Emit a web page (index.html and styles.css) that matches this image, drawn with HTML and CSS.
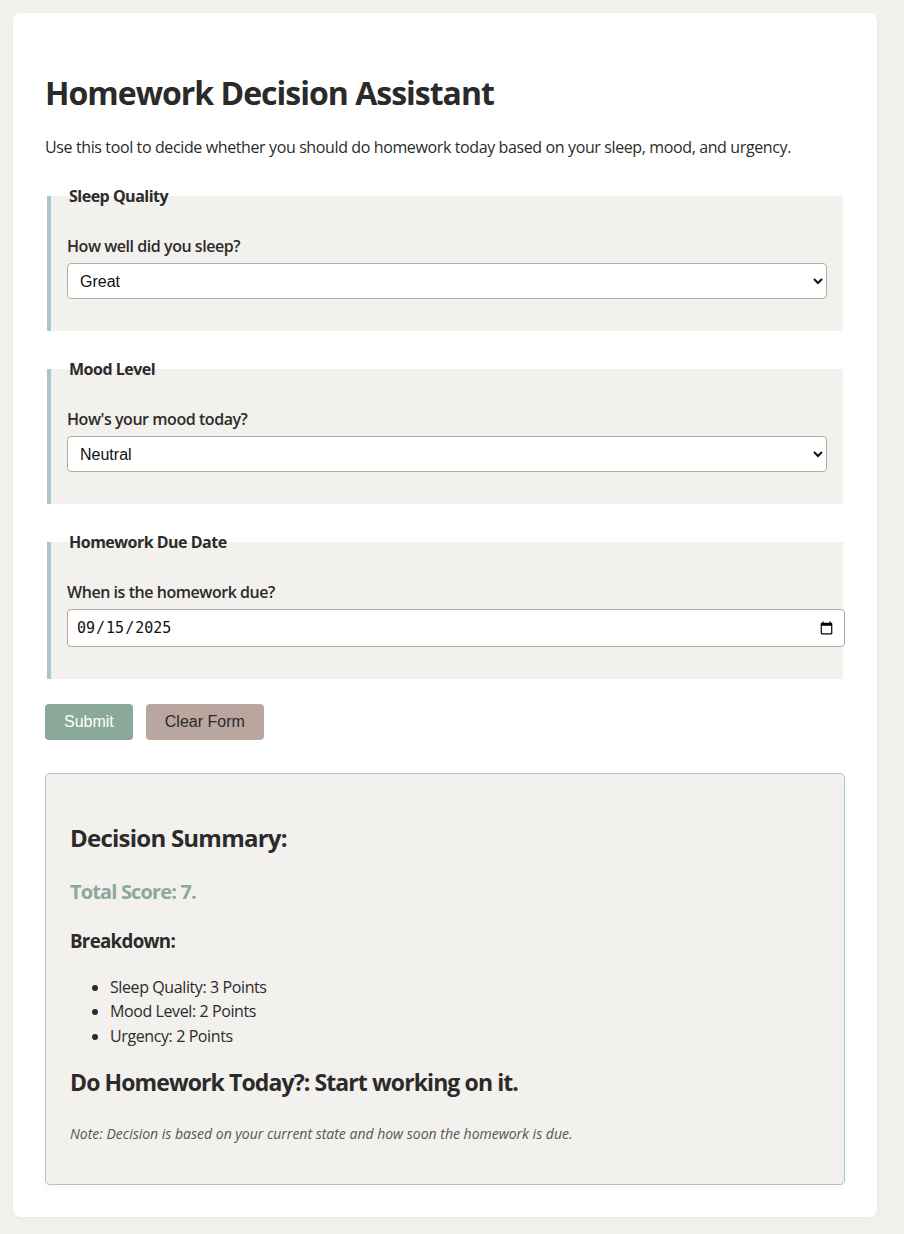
FILE: index.html
```html
<!DOCTYPE html>
<html lang="en">
<head>
<meta charset="utf-8">
<title>Homework Decision Assistant</title>
<link rel="stylesheet" href="styles.css">
</head>
<body>
<div class="container">
  <h1 class="title">Homework Decision Assistant</h1>
  <p class="intro">Use this tool to decide whether you should do homework today based on your sleep, mood, and urgency.</p>
  <form class="form">
    <fieldset class="section">
      <legend class="section-title">Sleep Quality</legend>
      <div class="field">
        <label class="field-label" for="sleep">How well did you sleep?</label>
        <select class="select" id="sleep">
          <option>Great</option>
          <option>Okay</option>
          <option>Poor</option>
        </select>
      </div>
    </fieldset>
    <fieldset class="section">
      <legend class="section-title">Mood Level</legend>
      <div class="field">
        <label class="field-label" for="mood">How's your mood today?</label>
        <select class="select" id="mood">
          <option>Neutral</option>
          <option>Good</option>
          <option>Bad</option>
        </select>
      </div>
    </fieldset>
    <fieldset class="section section-last">
      <legend class="section-title">Homework Due Date</legend>
      <div class="field">
        <label class="field-label" for="due">When is the homework due?</label>
        <input class="date" id="due" type="date" value="2025-09-15">
      </div>
    </fieldset>
    <div class="actions">
      <button class="btn btn-submit" type="button">Submit</button>
      <button class="btn btn-clear" type="button">Clear Form</button>
    </div>
  </form>
  <div class="result">
    <h2 class="result-title">Decision Summary:</h2>
    <p class="score">Total Score: 7.</p>
    <h3 class="breakdown-title">Breakdown:</h3>
    <ul class="breakdown">
      <li>Sleep Quality: 3 Points</li>
      <li>Mood Level: 2 Points</li>
      <li>Urgency: 2 Points</li>
    </ul>
    <h2 class="verdict">Do Homework Today?: Start working on it.</h2>
    <p class="note">Note: Decision is based on your current state and how soon the homework is due.</p>
  </div>
</div>
</body>
</html>
```
FILE: styles.css
```css
* {
  box-sizing: border-box;
}

html, body {
  margin: 0;
  padding: 0;
}

body {
  background: #f3f1ee;
  color: #2b2b2b;
  font-family: "Open Sans", "Noto Sans", sans-serif;
  font-size: 16px;
  line-height: 24px;
  padding: 13px;
}

.container {
  width: 864px;
  background: #ffffff;
  border-radius: 8px;
  padding: 32px;
  box-shadow: 0 2px 8px rgba(0, 0, 0, 0.04);
}

.title {
  font-size: 32px;
  line-height: 40px;
  font-weight: 700;
  letter-spacing: -1px;
  margin: 28px 0 22px;
  color: #2a2a2a;
}

.intro {
  margin: 0 0 26px;
  font-size: 16px;
  line-height: 24px;
  letter-spacing: -0.38px;
}

.form {
  margin: 0;
}

.section {
  margin: 0 2px 27px;
  padding: 16px;
  border: none;
  border-left: 4px solid #a9c6cc;
  background: #f3f1ee;
  min-width: 0;
}

.section-last {
  margin-bottom: 25px;
}

.section-title {
  font-weight: 700;
  font-size: 16px;
  line-height: 22px;
  letter-spacing: -0.5px;
  padding: 0 2px;
}

.field {
  margin: 12px 0 16px;
}

.field-label {
  display: block;
  font-weight: 600;
  font-size: 16px;
  line-height: 22px;
  letter-spacing: -0.45px;
  margin-bottom: 6px;
}

.select {
  display: block;
  width: 100%;
  height: 36px;
  padding: 0 8px;
  font-family: "Liberation Sans", Arial, sans-serif;
  font-size: 16px;
  color: #111;
  background: #ffffff;
  border: 1px solid #b8aaa3;
  border-radius: 4px;
}

.date {
  display: block;
  box-sizing: content-box;
  width: 100%;
  height: 20px;
  padding: 8px;
  font-family: "DejaVu Sans Mono", "Liberation Mono", monospace;
  font-size: 15px;
  color: #111;
  background: #ffffff;
  border: 1px solid #b8aaa3;
  border-radius: 4px;
}

.actions {
  display: flex;
  gap: 13px;
}

.btn {
  font-family: "Liberation Sans", Arial, sans-serif;
  font-size: 16px;
  line-height: 20px;
  padding: 8px 19px;
  border: none;
  border-radius: 4px;
  cursor: pointer;
}

.btn-submit {
  background: #8aa99a;
  color: #ffffff;
}

.btn-clear {
  background: #b8a69f;
  color: #2b2b2b;
}

.result {
  margin-top: 33px;
  background: #f3f1ee;
  border: 1px solid #a9c6cc;
  border-radius: 5px;
  padding: 24px;
  box-shadow: 0 2px 6px rgba(0, 0, 0, 0.04);
}

.result-title {
  font-size: 24px;
  line-height: 32px;
  font-weight: 700;
  letter-spacing: -0.76px;
  margin: 24px 0 0;
}

.score {
  font-size: 20px;
  line-height: 28px;
  font-weight: 700;
  letter-spacing: -0.85px;
  color: #8aa99a;
  margin: 24px 0 0;
}

.breakdown-title {
  font-size: 18.72px;
  line-height: 26px;
  font-weight: 700;
  letter-spacing: -0.7px;
  margin: 22px 0 0;
}

.breakdown {
  margin: 21px 0 0;
  padding-left: 40px;
  font-size: 16px;
  line-height: 24.3px;
  letter-spacing: -0.4px;
}

.verdict {
  font-size: 23px;
  line-height: 28px;
  font-weight: 700;
  letter-spacing: -0.9px;
  margin: 20px 0 0;
}

.note {
  font-size: 14px;
  line-height: 20px;
  font-style: italic;
  color: #555555;
  margin: 28px 0 16px;
}
```
